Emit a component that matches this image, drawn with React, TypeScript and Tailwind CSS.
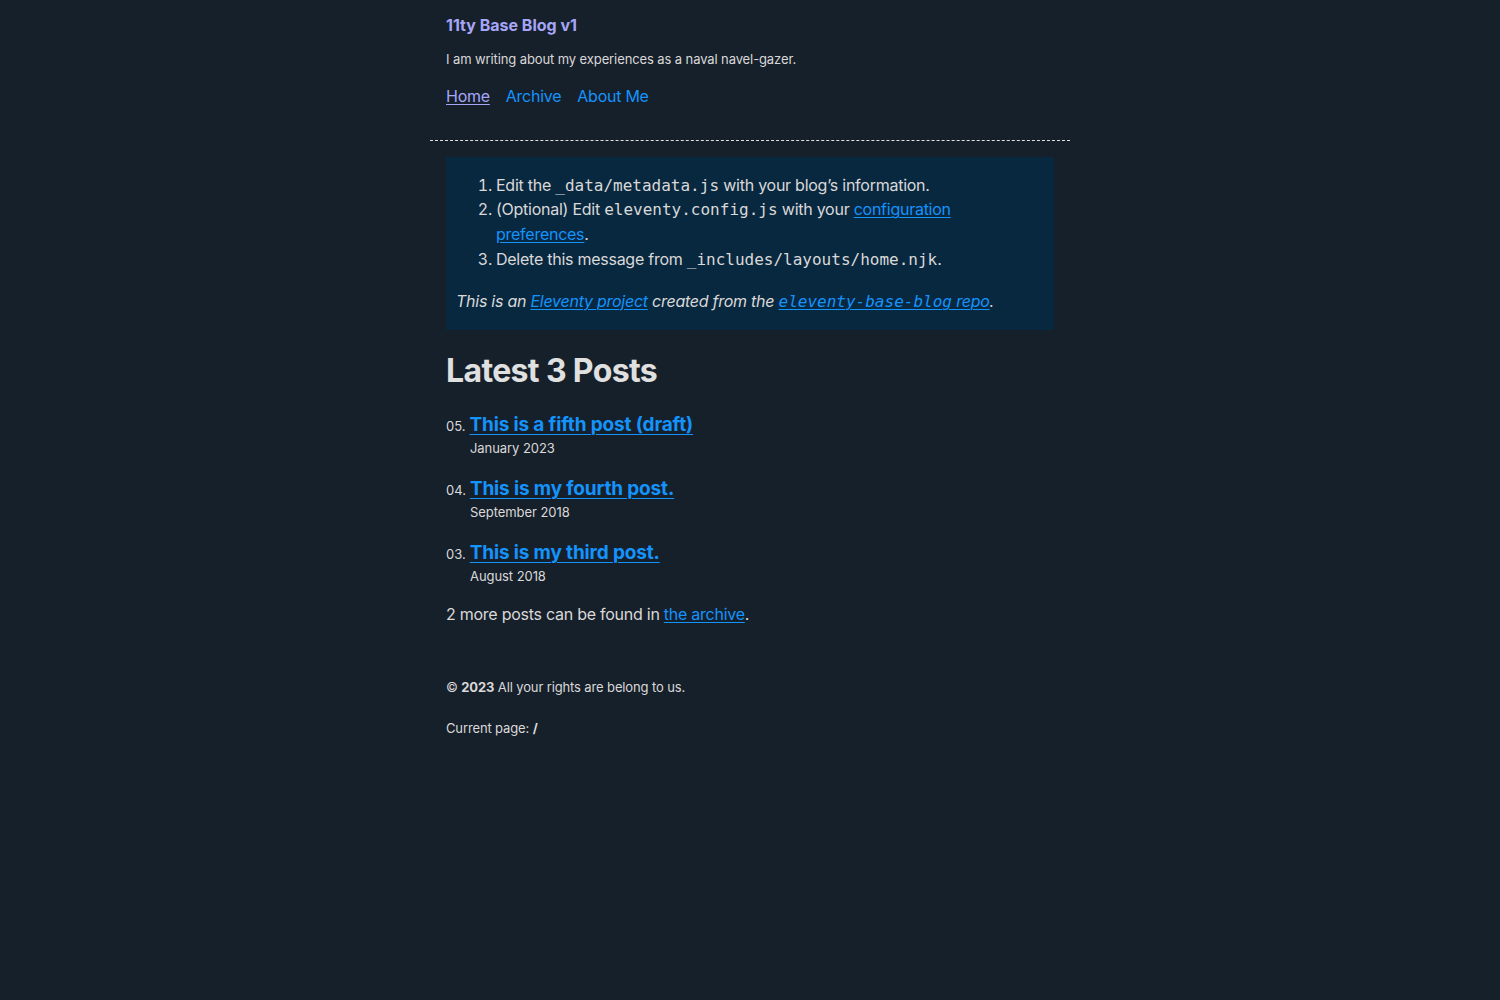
import React from 'react';

const sans = "font-['Inter','Noto_Sans',sans-serif]";
const mono = "font-['DejaVu_Sans_Mono','Liberation_Mono',monospace] tracking-normal leading-none";

const posts = [
  { num: '05.', title: 'This is a fifth post (draft)', date: 'January 2023' },
  { num: '04.', title: 'This is my fourth post.', date: 'September 2018' },
  { num: '03.', title: 'This is my third post.', date: 'August 2018' },
];

const linkCls = 'text-[#1493fb] underline underline-offset-2 decoration-1';

export default function App() {
  return (
    <div className={`min-h-screen bg-[#16202b] text-[#dad8d8] tracking-[-0.016em] ${sans}`}>
      <div className="mx-auto w-[640px]">
        <header className="border-b border-dashed border-[#e0e0e0] px-4 pt-4 pb-8">
          <a className="block text-base font-bold leading-[19px] tracking-normal text-[#a6a6f8]" href="#">
            11ty Base Blog v1
          </a>
          <p className="mt-[15px] text-[13px] leading-[19.5px] tracking-[-0.008em]">
            I am writing about my experiences as a naval navel-gazer.
          </p>
          <nav className="mt-[14px]">
            <ul className="flex gap-4 text-base leading-6">
              <li>
                <a href="#" className="text-[#a6a6f8] underline underline-offset-2 decoration-1">Home</a>
              </li>
              <li>
                <a href="#" className="text-[#1493fb]">Archive</a>
              </li>
              <li>
                <a href="#" className="text-[#1493fb]">About Me</a>
              </li>
            </ul>
          </nav>
        </header>

        <main className="p-4">
          <div className="bg-[#082840] px-[10px] pt-4 pb-[17px] text-base">
            <ol className="list-decimal pl-10 leading-[24.8px]">
              <li>
                Edit the <code className={mono}>_data/metadata.js</code> with your blog’s information.
              </li>
              <li>
                (Optional) Edit <code className={mono}>eleventy.config.js</code> with your{' '}
                <a href="#" className={linkCls}>configuration preferences</a>.
              </li>
              <li>
                Delete this message from <code className={mono}>_includes/layouts/home.njk</code>.
              </li>
            </ol>
            <p className="mt-[17px] italic leading-6">
              This is an <a href="#" className={linkCls}>Eleventy project</a> created from the{' '}
              <a href="#" className={linkCls}>
                <code className={mono}>eleventy-base-blog</code> repo
              </a>
              .
            </p>
          </div>

          <h1 className="mt-[22px] text-[32px] font-bold leading-[38px] tracking-[-0.02em] text-[#e0e0e0]">
            Latest 3 Posts
          </h1>

          <ol className="mt-[22px] pl-6">
            {posts.map((p) => (
              <li key={p.num} className="mb-[18px] last:mb-4 flex flex-wrap items-baseline">
                <span className="-ml-6 text-[13px] leading-none tracking-normal">{p.num}</span>
                <a
                  href="#"
                  className="basis-[calc(100%-1.5rem)] pl-[4px] pr-2 text-[19px] font-bold leading-[26px] tracking-[-0.008em] text-[#1493fb] underline underline-offset-[3px] decoration-1"
                >
                  {p.title}
                </a>
                <span className="basis-full text-[13px] leading-[20px] tracking-[-0.005em]">{p.date}</span>
              </li>
            ))}
          </ol>

          <p className="mt-4 text-base leading-6">
            2 more posts can be found in <a href="#" className={linkCls}>the archive</a>.
          </p>
        </main>

        <footer className="px-4 pt-[32px] tracking-[-0.008em]">
          <p className="text-base leading-6">
            <span className="text-[13px]">
              © <b>2023</b> All your rights are belong to us.
            </span>
          </p>
          <p className="mt-4 text-base leading-6">
            <span className="text-[13px]">
              Current page: <b>/</b>
            </span>
          </p>
        </footer>
      </div>
    </div>
  );
}
